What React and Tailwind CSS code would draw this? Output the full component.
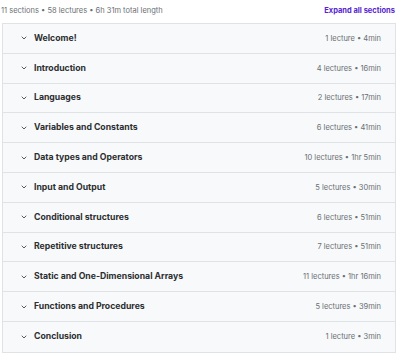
import React from 'react';

const sections = [
  { title: 'Welcome!', info: '1 lecture • 4min' },
  { title: 'Introduction', info: '4 lectures • 16min' },
  { title: 'Languages', info: '2 lectures • 17min' },
  { title: 'Variables and Constants', info: '6 lectures • 41min' },
  { title: 'Data types and Operators', info: '10 lectures • 1hr 5min' },
  { title: 'Input and Output', info: '5 lectures • 30min' },
  { title: 'Conditional structures', info: '6 lectures • 51min' },
  { title: 'Repetitive structures', info: '7 lectures • 51min' },
  { title: 'Static and One-Dimensional Arrays', info: '11 lectures • 1hr 16min' },
  { title: 'Functions and Procedures', info: '5 lectures • 39min' },
  { title: 'Conclusion', info: '1 lecture • 3min' },
];

const Chevron = () => (
  <svg width="8" height="8" viewBox="0 0 24 24" fill="none" stroke="#3e4143" strokeWidth="2.6" strokeLinecap="round" strokeLinejoin="round">
    <polyline points="6 9 12 15 18 9" />
  </svg>
);

export default function App() {
  return (
    <div className="w-[400px] h-[354px] bg-white font-['Inter',sans-serif] text-[#2d2f31]">
      <div className="flex items-center justify-between pl-[1px] pr-[5px] h-[23px] pb-[1px]">
        <span className="text-[7.5px] text-[#6a6f73]">11 sections • 58 lectures • 6h 31m total length</span>
        <span className="text-[7.5px] font-bold text-[#5624d0]">Expand all sections</span>
      </div>
      <div className="ml-[2px] w-[394px] border border-[#dfe3e6]">
        {sections.map((s, i) => (
          <div
            key={s.title}
            className={`flex items-center h-[29.8px] bg-[#f7f9fa] pl-[17px] pr-[14px] ${i < sections.length - 1 ? 'border-b border-[#dfe3e6]' : ''}`}
          >
            <Chevron />
            <span className="ml-[6px] text-[8.7px] font-bold flex-1">{s.title}</span>
            <span className="text-[7.5px] text-[#6a6f73]">{s.info}</span>
          </div>
        ))}
      </div>
    </div>
  );
}
